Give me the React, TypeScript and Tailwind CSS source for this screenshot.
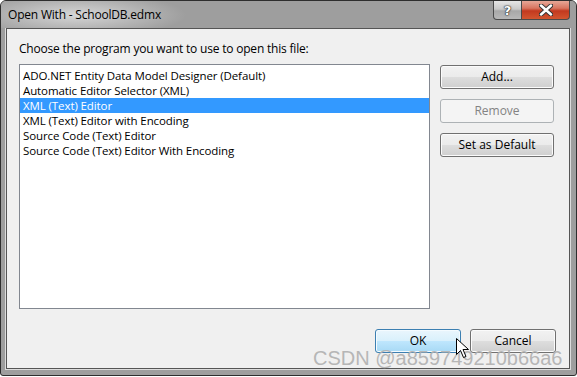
import React from "react";

const items = [
  "ADO.NET Entity Data Model Designer (Default)",
  "Automatic Editor Selector (XML)",
  "XML (Text) Editor",
  "XML (Text) Editor with Encoding",
  "Source Code (Text) Editor",
  "Source Code (Text) Editor With Encoding",
];

const font = { fontFamily: '"Open Sans", "Noto Sans", sans-serif' };

function Btn({ children, cls = "" }: { children: React.ReactNode; cls?: string }) {
  return (
    <div
      className={
        "flex items-center justify-center h-[24px] rounded-[3px] border border-[#707070] text-[12px] text-black bg-[linear-gradient(#f2f2f2_0%,#ebebeb_48%,#dddddd_52%,#cfcfcf_100%)] shadow-[inset_0_0_0_1px_#fbfbfb] " +
        cls
      }
    >
      {children}
    </div>
  );
}

export default function App() {
  return (
    <div className="relative w-[577px] h-[377px] bg-white overflow-hidden" style={font}>
      <div className="w-[577px] h-[376px] rounded-t-[6px] rounded-b-[3px] border border-[#2e2e2e] bg-[#9e9e9e] flex flex-col pl-[5px] pr-[6px] pb-[6px]">
        {/* title bar */}
        <div className="h-[27px] flex items-start relative bg-[radial-gradient(ellipse_110px_22px_at_75px_14px,#d6d6d6_0%,#bdbdbd_45%,#9e9e9e_100%)] -ml-[5px] -mr-[6px] pl-[7px] pr-[6px] rounded-t-[5px]">
          <div className="pt-[6px] text-[12px] leading-[16px] text-black tracking-[-0.2px]">Open With - SchoolDB.edmx</div>
          <div className="ml-auto flex h-[19px]">
            <div className="w-[29px] h-[19px] border border-[#4a4a4a] border-t-0 rounded-bl-[4px] bg-[linear-gradient(#e6e6e6_0%,#c9c9c9_45%,#a8a8a8_55%,#b8b8b8_100%)] flex items-center justify-center">
              <span className="text-[13px] font-bold text-white leading-none [text-shadow:0_0_1px_#222,0_0_1px_#222,0_0_2px_#333]" style={{ fontFamily: '"DejaVu Sans", sans-serif' }}>?</span>
            </div>
            <div className="w-[48px] h-[19px] border border-[#4a4a4a] border-t-0 border-l-0 rounded-br-[4px] bg-[linear-gradient(#e7a797_0%,#d87560_40%,#c2391f_55%,#d2552f_100%)] flex items-center justify-center">
              <svg width="14" height="12" viewBox="0 0 14 12">
                <path d="M2 1.5 L12 10.5 M12 1.5 L2 10.5" stroke="#333" strokeWidth="4.5" strokeLinecap="round" />
                <path d="M2 1.5 L12 10.5 M12 1.5 L2 10.5" stroke="#fff" strokeWidth="2.5" strokeLinecap="round" />
              </svg>
            </div>
          </div>
        </div>
        {/* client */}
        <div className="flex-1 border border-[#555] shadow-[0_0_0_1px_#dcdcdc] bg-[#f0f0f0] flex flex-col pl-[12px] pr-[13px]">
          <div className="mt-[12px] h-[16px] text-[12px] leading-[16px] text-black tracking-[-0.2px]">
            Choose the program you want to use to open this file:
          </div>
          <div className="flex mt-[7px]">
            <div className="w-[411px] h-[245px] border border-[#828790] bg-white pt-[3px]">
              {items.map((t, i) => (
                <div
                  key={t}
                  className={
                    "h-[15px] pl-[3px] text-[11.5px] leading-[15px] tracking-[-0.1px] " +
                    (i === 2 ? "bg-[#3399ff] text-white" : "text-black")
                  }
                >
                  {t}
                </div>
              ))}
            </div>
            <div className="ml-[10px] w-[114px] flex flex-col mt-[1px] gap-[10px]">
              <Btn>Add...</Btn>
              <div className="flex items-center justify-center h-[24px] rounded-[3px] border border-[#adb2b5] bg-[#f4f4f4] text-[12px] text-[#838383]">
                Remove
              </div>
              <Btn>Set as Default</Btn>
            </div>
          </div>
          <div className="flex justify-end mt-[20px] gap-[9px]">
            <div className="flex items-center justify-center w-[86px] h-[24px] rounded-[3px] border border-[#3c7fb1] text-[12px] text-black bg-[linear-gradient(#eaf6fd_0%,#d9f0fc_48%,#bee6fd_52%,#a7d9f5_100%)] shadow-[inset_0_0_0_1px_#f4fbff]">
              OK
            </div>
            <Btn cls="w-[86px]">Cancel</Btn>
          </div>
        </div>
      </div>
      {/* watermark */}
      <div
        className="absolute left-[313px] top-[351px] text-[20px] leading-[15px] text-[#b0b0b0] opacity-90"
        style={{ fontFamily: '"Liberation Sans", Arial, sans-serif' }}
      >
        CSDN @a859749210b66a6
      </div>
      {/* cursor */}
      <svg className="absolute left-[456px] top-[338px]" width="14" height="22" viewBox="0 0 14 22">
        <path d="M0.5 0.5 L0.5 16.5 L4.5 12.5 L7.5 19.5 L10 18.5 L7 11.5 L12.5 11.5 Z" fill="#fff" stroke="#000" strokeWidth="1" strokeLinejoin="round" />
      </svg>
    </div>
  );
}
